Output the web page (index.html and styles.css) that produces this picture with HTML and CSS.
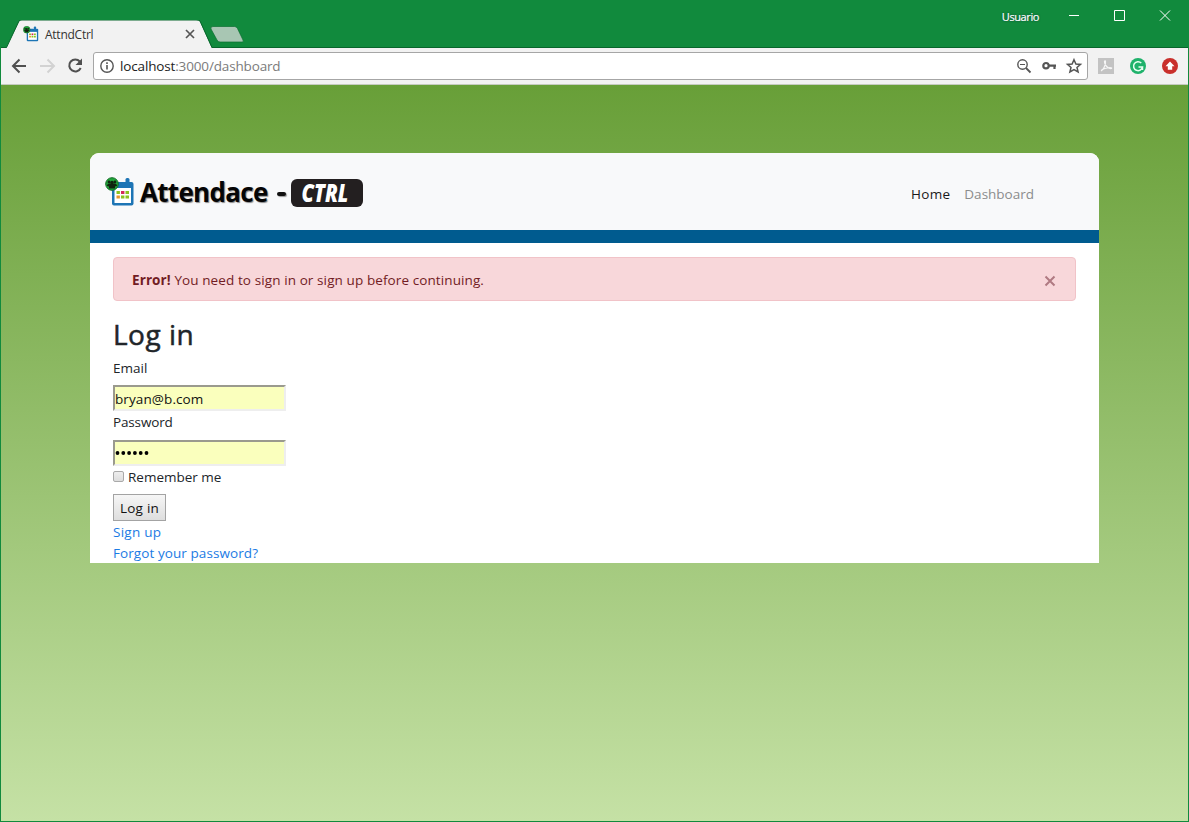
FILE: index.html
```html
<!DOCTYPE html>
<html lang="en">
<head>
<meta charset="utf-8">
<title>AttndCtrl</title>
<link rel="stylesheet" href="styles.css">
</head>
<body>
<div class="window">
  <header class="titlebar">
    <svg class="tabs" width="250" height="30" viewBox="0 0 250 30">
      <path d="M6 28.5L19 1.5Q20 0 22 0H196Q199 0 200 1.500L212 28.500H250V30H6Z" fill="#f2f2f2"/>
      <path d="M0 27.500H6.500L19 1Q19.500 0 21 0H197Q199.500 0 200 1L212 27.500H250" fill="none" stroke="#08662c"/>
      <path d="M213 6.500H234.500Q236.500 6.500 237.500 8.500L243 20Q244 22 242 22H220Q218 22 217 20L211 9Q210 6.500 213 6.500Z" fill="#a8c6b3" stroke="#0b6f31" stroke-width=".7"/>
    </svg>
    <div class="tab">
      <svg class="favicon" width="16" height="16" viewBox="0 0 30 30"><use href="#calendar"/></svg>
      <span class="tab-title">AttndCtrl</span>
      <svg class="tab-close" width="10" height="10" viewBox="0 0 10 10"><path d="M1 1L9 9M9 1L1 9" stroke="#555" stroke-width="1.700"/></svg>
    </div>
    <div class="controls">
      <span class="user">Usuario</span>
      <svg width="110" height="12" viewBox="0 0 110 12" fill="none" stroke="#fff"><path d="M5 5.500H15M50.500 .5H60.500V10.500H50.500ZM96 .5L106 10.500M106 .5L96 10.500"/></svg>
    </div>
  </header>

  <nav class="toolbar">
    <svg width="84" height="20" viewBox="0 0 84 20" fill="none" stroke-width="2">
      <path d="M26 10H13.500M19.500 3.500L13 10L19.500 16.500" stroke="#505050"/>
      <path d="M40 10H53M47.500 3.500L54 10L47.500 16.500" stroke="#d2d2d2"/>
      <path d="M79.800 5.500A6 6 0 1 0 80.700 12" stroke="#505050"/>
      <path d="M82 2.500V9H75.500Z" fill="#505050"/>
    </svg>
    <div class="omnibox">
      <svg width="16" height="16" viewBox="0 0 16 16"><circle cx="8" cy="8" r="6.200" fill="none" stroke="#555" stroke-width="1.400"/><path d="M7.200 7H8.800V11.500H7.200ZM7.200 4.300H8.800V5.900H7.200Z" fill="#555"/></svg>
      <span class="url"><b>localhost</b>:3000/dashboard</span>
      <svg class="omni-icons" width="68" height="18" viewBox="0 0 68 18" fill="none" stroke="#555">
        <circle cx="7.500" cy="7.500" r="4.700" stroke-width="1.400"/><path d="M11 11L15.500 15.500" stroke-width="1.800"/><path d="M5 7.500H10"/>
        <circle cx="31" cy="8.700" r="2.700" stroke-width="2.200"/><path d="M34 8.700H41M39.500 8.700V12" stroke-width="2.200"/>
        <path d="M59 2.700L60.900 7L65.500 7.400L62 10.500L63.100 15L59 12.600L54.900 15L56 10.500L52.500 7.400L57.100 7Z" stroke-width="1.500"/>
      </svg>
    </div>
    <svg class="extensions" width="82" height="18" viewBox="0 0 82 18">
      <rect x="1" y="1" width="16" height="16" fill="#c3c3c3"/><path d="M4 14C6 13 9 8 8.500 4.500C8.300 3 7 4 7.700 6C8.500 9 11.500 12 14.500 11.500C16 10.500 9 10 4.500 13" fill="none" stroke="#f6f6f6" stroke-width="1.200"/>
      <circle cx="41" cy="9" r="8" fill="#1fb26b"/><path d="M44.300 6A4.500 4.500 0 1 0 45.500 10H41.500M45.500 9.500V13" fill="none" stroke="#e8fff2" stroke-width="1.500"/>
      <circle cx="73" cy="9" r="8" fill="#c9302c"/><path d="M73 4.500L77.500 9.300H75.200V12.700H70.800V9.300H68.500Z" fill="#fff"/>
    </svg>
  </nav>

  <main class="page">
    <div class="card">
      <div class="navbar">
        <div class="brand">
          <svg class="calendar" width="30" height="30" viewBox="0 0 30 30">
            <g id="calendar">
              <rect x="7" y="5" width="21.500" height="23.500" rx="2" fill="#1d75b5"/><rect x="20.500" y="1" width="4" height="8" rx="1.500" fill="#1d75b5"/>
              <path d="M9.500 11H26V26H9.500Z" fill="#fff"/>
              <path d="M11.500 14h3.400v3h-3.400zM20.500 14H24v3h-3.500zM16 18.500h3.400v3H16zM20.500 18.500H24v3h-3.500z" fill="#8bc220"/>
              <path d="M16 14h3.400v3H16z" fill="#d5285a"/><path d="M11.500 18.500h3.400v3h-3.400z" fill="#e8972e"/>
              <circle cx="7" cy="7" r="6.300" fill="#21a53b" stroke="#126d25"/>
              <g fill="#10240f"><circle cx="4" cy="5" r="1.400"/><circle cx="10" cy="5" r="1.400"/><circle cx="7" cy="5.500" r="1.800"/><path d="M2 9Q2 6.500 4.500 6.500H9.500Q12 6.500 12 9L10 9.500V11.500H4V9.500Z"/></g>
            </g>
          </svg>
          <span class="wordmark">Attendace</span><i class="dash"></i><span class="badge"><em>CTRL</em></span>
        </div>
        <div class="links"><a class="active">Home</a><a>Dashboard</a></div>
      </div>
      <div class="content">
        <div class="alert">
          <span class="message"><strong>Error!</strong> You need to sign in or sign up before continuing.</span>
          <svg width="12" height="12" viewBox="0 0 12 12"><path d="M1.500 1.500L10.500 10.500M10.500 1.500L1.500 10.500" stroke="#b07a82" stroke-width="2"/></svg>
        </div>
        <h2>Log in</h2>
        <label class="email-label">Email</label>
        <div class="field"><span class="email">bryan@b.com</span></div>
        <label class="password-label">Password</label>
        <div class="field"><svg width="36" height="6" viewBox="0 0 36 6"><g fill="#000"><circle cx="2.500" cy="3" r="1.900"/><circle cx="8.300" cy="3" r="1.900"/><circle cx="14.100" cy="3" r="1.900"/><circle cx="19.900" cy="3" r="1.900"/><circle cx="25.700" cy="3" r="1.900"/><circle cx="31.500" cy="3" r="1.900"/></g></svg></div>
        <div class="remember"><i class="checkbox"></i><span>Remember me</span></div>
        <button class="submit">Log in</button>
        <a class="link signup">Sign up</a>
        <a class="link forgot">Forgot your password?</a>
      </div>
    </div>
  </main>
</div>
</body>
</html>
```
FILE: styles.css
```css
* { box-sizing: border-box; }
body { margin: 0; font-family: "Open Sans", "Noto Sans", sans-serif; font-size: 13.5px; color: #212529; }
svg { display: block; flex: none; }
.window { width: 1189px; height: 822px; overflow: hidden; display: flex; flex-direction: column; border: 1px solid #118a3d; border-top: 0; }
.titlebar { height: 48px; flex: none; background: #118a3d; border-bottom: 1px solid #08662c; display: flex; justify-content: space-between; position: relative; margin-left: -1px; }
.tabs { position: absolute; left: 0; top: 20px; }
.tab { position: relative; display: flex; align-items: center; height: 28px; margin: 20px 0 0 23px; width: 172px; }
.tab-title { margin-left: 6px; font-size: 12px; letter-spacing: -.25px; color: #333; }
.tab-close { margin-left: auto; }
.controls { display: flex; gap: 25px; padding: 10px 14px 0 0; color: #fff; height: 24px; }
.user { font-size: 11px; line-height: 13px; letter-spacing: -.4px; -webkit-text-stroke: .2px #fff; text-shadow: 0 0 2px #033; }
.toolbar { height: 37px; flex: none; display: flex; align-items: center; background: #f2f2f2; border-bottom: 1px solid #c5cbbf; margin-left: -1px; }
.toolbar > svg:first-child { margin-right: 9px; }
.omnibox { width: 995px; height: 28px; display: flex; align-items: center; padding-left: 5px; background: #fff; border: 1px solid #a6a6a6; border-radius: 3px; }
.url { margin-left: 5px; color: #7b7b7b; letter-spacing: -.15px; }
.url b { font-weight: 400; color: #222; }
.omni-icons { margin-left: auto; margin-right: 4px; }
.extensions { margin-left: 9px; }
.page { flex: 1; padding: 68px 89px 0; background: linear-gradient(#689f38, #c5e1a5); }
.card { width: 1009px; height: 410px; background: #fff; border-radius: 9px 9px 0 0; overflow: hidden; }
.navbar { height: 90px; background: #f8f9fa; border-bottom: 13px solid #005b8f; display: flex; align-items: center; justify-content: space-between; padding: 0 65px 0 15px; }
.brand { display: flex; align-items: center; padding-top: 1px; }
.wordmark { margin-left: 5px; font-size: 26px; line-height: 30px; font-weight: 700; letter-spacing: -.7px; color: #050505; text-shadow: 1px 1px 1px #888; }
.dash { width: 9px; height: 4px; margin: 4px 5px 0 9px; background: #111; border-radius: 2px; box-shadow: 1px 1px 1px #999; }
.badge { width: 72px; height: 28px; margin-top: 1px; border-radius: 6px; background: #231f20; color: #fff; display: flex; align-items: center; justify-content: center; }
.badge em { font-size: 24.5px; line-height: 28px; font-weight: 800; margin-left: -3px; transform: scaleX(.81); }
.links { display: flex; gap: 14px; padding-top: 4px; color: #8b8c8d; }
.links .active { color: #1a1a1a; letter-spacing: .3px; }
.content { padding: 14px 23px 0; display: flex; flex-direction: column; align-items: flex-start; }
.alert { width: 963px; height: 44px; display: flex; align-items: center; justify-content: space-between; padding: 1px 19px 0 18px; background: #f8d7da; border: 1px solid #f1c3c8; border-radius: 4px; color: #721c24; letter-spacing: .1px; }
.alert svg { margin-top: 3px; }
h2 { margin: 15px 0 1px; height: 36px; font-size: 28px; line-height: 36px; font-weight: 500; letter-spacing: .5px; -webkit-text-stroke: .5px #212529; }
label { height: 22px; line-height: 22px; }
.email-label { margin: 4px 0 6px; }
.password-label { margin: 0 0 7px; letter-spacing: -.15px; }
.field { width: 173px; height: 26px; display: flex; align-items: center; background: #faffbd; border: 2px solid #eee; border-top-color: #9a9a8e; border-left-color: #9a9a8e; color: #111; }
.email { line-height: 20px; padding-top: 2px; letter-spacing: .1px; }
.remember { height: 22px; display: flex; align-items: center; }
.checkbox { width: 11px; height: 11px; margin: 0 4px 2px 0; border: 1px solid #a9a9a9; border-radius: 2px; background: linear-gradient(#eee, #ddd); }
.submit { width: 53px; height: 27px; margin-top: 6px; padding: 0; border: 1px solid #a3a3a3; background: linear-gradient(#f6f6f6, #dedede); font: inherit; letter-spacing: .25px; color: #111; white-space: nowrap; }
.link { height: 21px; line-height: 22px; color: #1b7be4; letter-spacing: .08px; }
.signup { letter-spacing: .25px; }
```
